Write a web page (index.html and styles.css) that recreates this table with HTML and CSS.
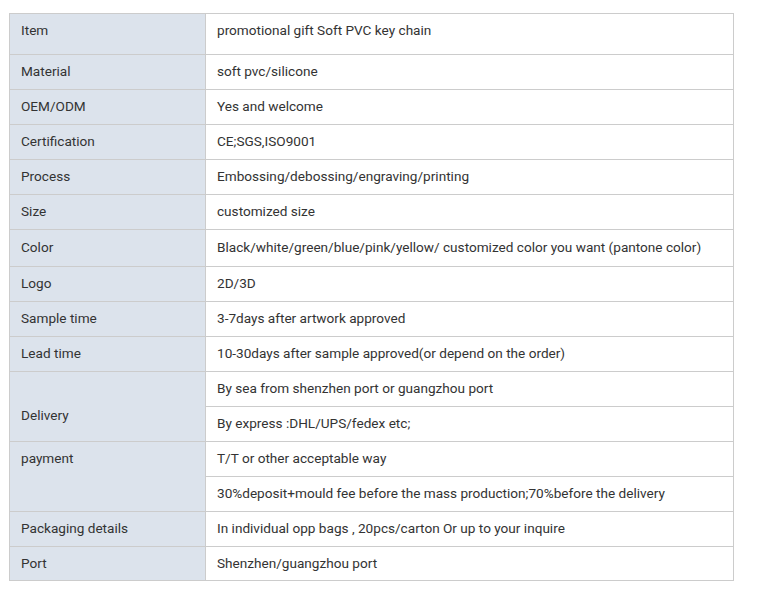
FILE: index.html
```html
<!DOCTYPE html>
<html>
<head>
<meta charset="utf-8">
<link rel="stylesheet" href="styles.css">
</head>
<body>
<table class="spec">
  <tr class="tall"><td class="k">Item</td><td class="v">promotional gift Soft PVC key chain</td></tr>
  <tr><td class="k">Material</td><td class="v">soft pvc/silicone</td></tr>
  <tr><td class="k">OEM/ODM</td><td class="v">Yes and welcome</td></tr>
  <tr><td class="k">Certification</td><td class="v">CE;SGS,ISO9001</td></tr>
  <tr><td class="k">Process</td><td class="v">Embossing/debossing/engraving/printing</td></tr>
  <tr><td class="k">Size</td><td class="v">customized size</td></tr>
  <tr class="mid"><td class="k">Color</td><td class="v">Black/white/green/blue/pink/yellow/ customized color you want (pantone color)</td></tr>
  <tr><td class="k">Logo</td><td class="v">2D/3D</td></tr>
  <tr><td class="k">Sample time</td><td class="v">3-7days after artwork approved</td></tr>
  <tr><td class="k">Lead time</td><td class="v">10-30days after sample approved(or depend on the order)</td></tr>
  <tr><td class="k k-delivery" rowspan="2">Delivery</td><td class="v">By sea from shenzhen port or guangzhou port</td></tr>
  <tr><td class="v">By express :DHL/UPS/fedex etc;</td></tr>
  <tr><td class="k" rowspan="2">payment</td><td class="v">T/T or other acceptable way</td></tr>
  <tr><td class="v">30%deposit+mould fee before the mass production;70%before the delivery</td></tr>
  <tr><td class="k">Packaging details</td><td class="v">In individual opp bags , 20pcs/carton Or up to your inquire</td></tr>
  <tr class="last"><td class="k">Port</td><td class="v">Shenzhen/guangzhou port</td></tr>
</table>
</body>
</html>
```
FILE: styles.css
```css
html, body {
  margin: 0;
  padding: 0;
  background: #ffffff;
}
body {
  padding: 13px 0 0 9px;
  font-family: Roboto, "Liberation Sans", Arial, sans-serif;
  font-size: 13.6px;
  color: #333333;
}
.spec {
  border-collapse: collapse;
  width: 725px;
}
.spec td {
  border: 1px solid #cccccc;
  padding: 0 11px;
  height: 34px;
  line-height: 32px;
  vertical-align: top;
  white-space: nowrap;
}
.spec .k {
  width: 173px;
  background: #dce3ec;
}
.spec .tall td {
  height: 40px;
}
.spec .mid td {
  height: 36px;
  line-height: 34px;
}
.spec .last td {
  height: 33px;
}
.spec .k-delivery {
  padding-top: 27px;
}
```
